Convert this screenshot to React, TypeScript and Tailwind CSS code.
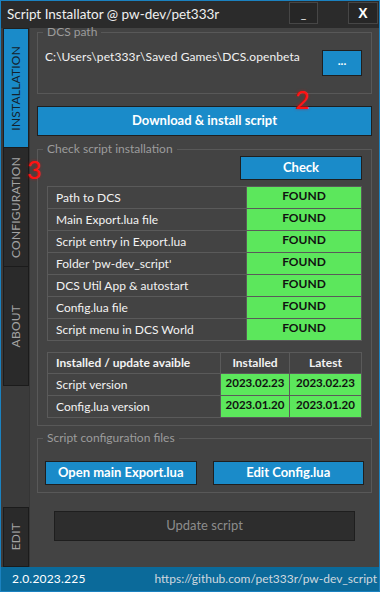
import React from "react"

const checks = [
  "Path to DCS",
  "Main Export.lua file",
  "Script entry in Export.lua",
  "Folder 'pw-dev_script'",
  "DCS Util App & autostart",
  "Config.lua file",
  "Script menu in DCS World",
]

const versions = [
  { name: "Script version", installed: "2023.02.23", latest: "2023.02.23" },
  { name: "Config.lua version", installed: "2023.01.20", latest: "2023.01.20" },
]

function Tab({ label, active, h }: { label: string; active?: boolean; h: string }) {
  return (
    <div
      className={`${h} ml-[2px] w-[26px] border flex items-center justify-center ${
        active ? "bg-[#1a8bc9] border-[#1f1f1f] text-[#14222c]" : "bg-[#2a2a2a] border-[#1b1b1b] text-[#a3a3a3]"
      }`}
    >
      <span className="[writing-mode:vertical-rl] rotate-180 text-[12px] leading-none tracking-[0.2px]">{label}</span>
    </div>
  )
}

export default function App() {
  return (
    <div className="relative w-[380px] h-[592px] border border-[#1b82c0] bg-[#434343] flex flex-col font-['Lato','Noto_Sans',sans-serif] overflow-hidden">
      {/* title bar */}
      <div className="h-[27px] bg-[#2b2b2b] flex items-start justify-between">
        <span className="pl-[6px] pt-[5px] text-[13.5px] leading-[17px] text-[#f0f0f0]">
          Script Installator @ pw-dev/pet333r
        </span>
        <div className="flex pt-[1px] pr-[1px] gap-[30px]">
          <div className="w-[29px] h-[22px] bg-[#262626] border border-[#464646] flex items-end justify-center pb-[3px]">
            <span className="text-white text-[12px] leading-none">_</span>
          </div>
          <div className="w-[30px] h-[22px] bg-[#262626] border border-[#464646] flex items-center justify-center">
            <span className="text-white font-bold text-[14px] leading-none font-['Liberation_Sans',sans-serif]">X</span>
          </div>
        </div>
      </div>

      <div className="flex flex-1 min-h-0">
        {/* sidebar */}
        <div className="w-[29px] bg-[#3b3b3b] border-r border-[#353535] flex flex-col">
          <Tab label="INSTALLATION" active h="h-[120px]" />
          <Tab label="CONFIGURATION" h="h-[120px] -mt-px" />
          <Tab label="ABOUT" h="h-[120px] -mt-px" />
          <div className="flex-1" />
          <Tab label="EDIT" h="h-[60px]" />
        </div>

        {/* content */}
        <div className="flex-1 px-[7px] text-[12px] text-[#f2f2f2]">
          <fieldset className="-mt-[2px] border border-[#585858]">
            <legend className="ml-[5px] px-[4px] text-[12px] leading-[12px] text-[#9c9c9c]">DCS path</legend>
            <div className="flex items-start justify-between pl-[7px] pr-[9px] pt-[12px] pb-[17px]">
              <span className="-mt-[1px] leading-[16px] tracking-[0.1px]">C:\Users\pet333r\Saved Games\DCS.openbeta</span>
              <button className="w-[40px] h-[26px] bg-[#1a8bc9] border border-[#1f1f1f] text-white font-bold text-[12px] leading-none pb-[4px]">
                ...
              </button>
            </div>
          </fieldset>

          <button className="mt-[12px] w-full h-[30px] bg-[#1a8bc9] border border-[#1f1f1f] text-white font-bold text-[13px]">
            Download &amp; install script
          </button>

          <fieldset className="mt-[7px] border border-[#585858]">
            <legend className="ml-[5px] px-[4px] text-[12px] leading-[12px] text-[#9c9c9c]">Check script installation</legend>
            <div className="flex justify-end pr-[9px] pt-[1px]">
              <button className="w-[122px] h-[24px] bg-[#1a8bc9] border border-[#1f1f1f] text-white font-bold text-[13px]">
                Check
              </button>
            </div>
            <div className="mx-[9px] mt-[6px] grid grid-cols-[198px_1fr] gap-px bg-[#5a5a5a] p-px">
              {checks.map((c) => (
                <React.Fragment key={c}>
                  <div className="h-[21px] bg-[#434343] pl-[8px] flex items-center leading-[16px]">{c}</div>
                  <div className="h-[21px] bg-[#5ce75c] text-center font-bold text-[#111] leading-[17px]">FOUND</div>
                </React.Fragment>
              ))}
            </div>
            <div className="mx-[9px] mt-[11px] mb-[7px] grid grid-cols-[172px_68px_1fr] gap-px bg-[#5a5a5a] p-px">
              <div className="h-[20px] bg-[#434343] pl-[8px] flex items-center font-bold">Installed / update avaible</div>
              <div className="h-[20px] bg-[#434343] flex items-center justify-center font-bold">Installed</div>
              <div className="h-[20px] bg-[#434343] flex items-center justify-center font-bold">Latest</div>
              {versions.map((v) => (
                <React.Fragment key={v.name}>
                  <div className="h-[21px] bg-[#434343] pl-[8px] flex items-center">{v.name}</div>
                  <div className="h-[21px] bg-[#5ce75c] text-center font-bold text-[#111] text-[11.5px] leading-[17px]">
                    {v.installed}
                  </div>
                  <div className="h-[21px] bg-[#5ce75c] text-center font-bold text-[#111] text-[11.5px] leading-[17px]">
                    {v.latest}
                  </div>
                </React.Fragment>
              ))}
            </div>
          </fieldset>

          <fieldset className="mt-[6px] border border-[#585858]">
            <legend className="ml-[5px] px-[4px] text-[12px] leading-[12px] text-[#9c9c9c]">Script configuration files</legend>
            <div className="flex gap-[16px] px-[7px] pt-[17px] pb-[7px]">
              <button className="flex-1 h-[24px] bg-[#1a8bc9] border border-[#1f1f1f] text-white font-bold text-[13px]">
                Open main Export.lua
              </button>
              <button className="flex-1 h-[24px] bg-[#1a8bc9] border border-[#1f1f1f] text-white font-bold text-[13px]">
                Edit Config.lua
              </button>
            </div>
          </fieldset>

          <button className="mt-[18px] mx-[17px] w-[calc(100%-34px)] h-[30px] bg-[#2d2d2d] border border-[#1e1e1e] text-[#8c8c8c] text-[13px]">
            Update script
          </button>
        </div>
      </div>

      {/* footer */}
      <div className="h-[24px] bg-[#0b6a9a] flex items-center justify-between pl-[11px] pr-[2px] text-[12px]">
        <span className="text-white tracking-[0.2px]">2.0.2023.225</span>
        <span className="text-[#cfd8df]">https://github.com/pet333r/pw-dev_script</span>
      </div>

      <span className="absolute left-[294px] top-[86px] text-[25px] leading-[25px] text-[#ff1212] [text-shadow:0_0_3px_rgba(255,0,0,0.6)]">
        2
      </span>
      <span className="absolute left-[26px] top-[156px] text-[25px] leading-[25px] text-[#ff1212] [text-shadow:0_0_3px_rgba(255,0,0,0.6)]">
        3
      </span>
    </div>
  )
}
